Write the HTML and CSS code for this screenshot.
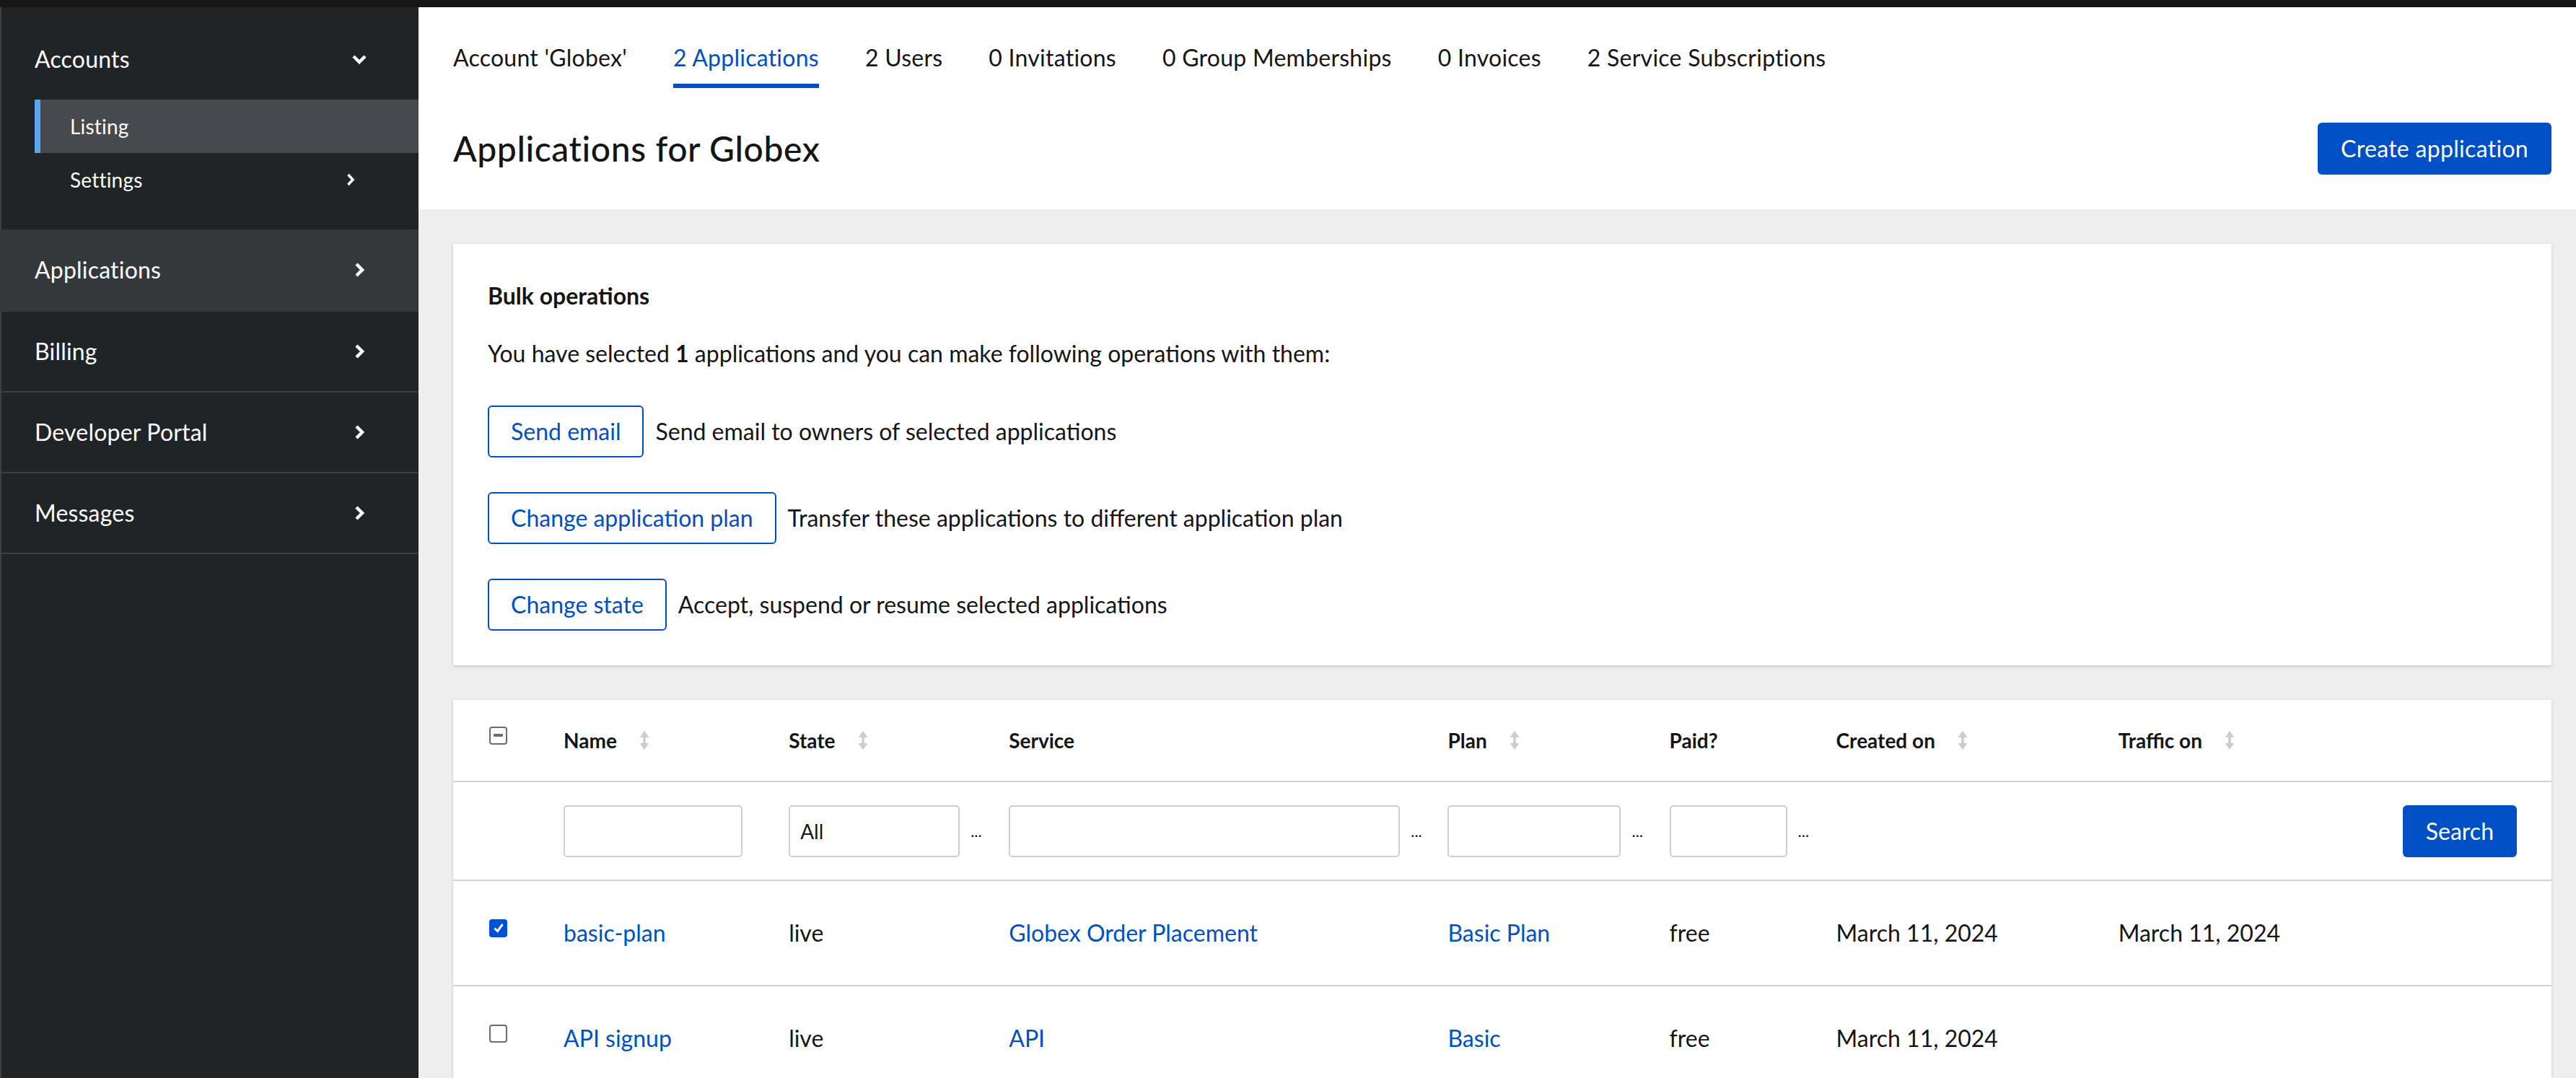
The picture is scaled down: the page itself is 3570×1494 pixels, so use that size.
FILE: index.html
```html
<!DOCTYPE html>
<html lang="en">
<head>
<meta charset="utf-8">
<title>Applications for Globex</title>
<link rel="stylesheet" href="styles.css">
</head>
<body>
<div class="topbar"></div>
<div class="layout">
  <nav class="sidebar">
    <div class="nav-group">
      <div class="nav-row nav-group-header">
        <span>Accounts</span>
        <span class="icon-box"><svg width="22" height="14" viewBox="0 0 22 14"><polyline points="3,3 11,11 19,3" fill="none" stroke="#fff" stroke-width="4.5" stroke-linejoin="miter"/></svg></span>
      </div>
      <ul class="subnav">
        <li class="nav-row sub-item current"><span>Listing</span></li>
        <li class="nav-row sub-item"><span>Settings</span><svg width="12" height="18" viewBox="0 0 12 18"><polyline points="2.5,2 9,9 2.5,16" fill="none" stroke="#fff" stroke-width="3.6"/></svg></li>
      </ul>
    </div>
    <div class="nav-row nav-item active"><span>Applications</span><span class="icon-box"><svg width="15" height="22" viewBox="0 0 15 22"><polyline points="3,3 11,11 3,19" fill="none" stroke="#fff" stroke-width="4.5"/></svg></span></div>
    <div class="nav-row nav-item"><span>Billing</span><span class="icon-box"><svg width="15" height="22" viewBox="0 0 15 22"><polyline points="3,3 11,11 3,19" fill="none" stroke="#fff" stroke-width="4.5"/></svg></span></div>
    <div class="nav-row nav-item"><span>Developer Portal</span><span class="icon-box"><svg width="15" height="22" viewBox="0 0 15 22"><polyline points="3,3 11,11 3,19" fill="none" stroke="#fff" stroke-width="4.5"/></svg></span></div>
    <div class="nav-row nav-item"><span>Messages</span><span class="icon-box"><svg width="15" height="22" viewBox="0 0 15 22"><polyline points="3,3 11,11 3,19" fill="none" stroke="#fff" stroke-width="4.5"/></svg></span></div>
  </nav>

  <main class="main">
    <header class="page-header">
      <nav class="tabs">
        <a class="tab" href="#">Account 'Globex'</a>
        <a class="tab active" href="#">2 Applications</a>
        <a class="tab" href="#">2 Users</a>
        <a class="tab" href="#">0 Invitations</a>
        <a class="tab" href="#">0 Group Memberships</a>
        <a class="tab" href="#">0 Invoices</a>
        <a class="tab" href="#">2 Service Subscriptions</a>
      </nav>
      <div class="title-row">
        <h1 class="title">Applications for Globex</h1>
        <button class="btn btn-primary">Create application</button>
      </div>
    </header>

    <div class="content">
      <section class="card bulk">
        <h2 class="bulk-title">Bulk operations</h2>
        <p class="bulk-text">You have selected <strong>1</strong> applications and you can make following operations with them:</p>
        <div class="ops">
          <div class="op"><button class="btn btn-secondary">Send email</button><span>Send email to owners of selected applications</span></div>
          <div class="op"><button class="btn btn-secondary">Change application plan</button><span>Transfer these applications to different application plan</span></div>
          <div class="op"><button class="btn btn-secondary">Change state</button><span>Accept, suspend or resume selected applications</span></div>
        </div>
      </section>

      <section class="card table-card">
        <table class="apps">
          <colgroup>
            <col class="c-check"><col class="c-name"><col class="c-state"><col class="c-service"><col class="c-plan"><col class="c-paid"><col class="c-created"><col class="c-traffic"><col class="c-search">
          </colgroup>
          <thead>
            <tr>
              <th class="check-cell"><span class="cb mixed"><span class="dash"></span></span></th>
              <th><span class="th-inner">Name<svg class="sort" width="12" height="28" viewBox="0 0 12 28"><rect x="4.2" y="6" width="3.6" height="16" fill="#cdcdcd"/><path d="M0.5 9.5L6 1.5L11.5 9.5Z M0.5 18.5L6 26.5L11.5 18.5Z" fill="#cdcdcd" stroke="#cdcdcd" stroke-width="1" stroke-linejoin="round"/></svg></span></th>
              <th><span class="th-inner">State<svg class="sort" width="12" height="28" viewBox="0 0 12 28"><rect x="4.2" y="6" width="3.6" height="16" fill="#cdcdcd"/><path d="M0.5 9.5L6 1.5L11.5 9.5Z M0.5 18.5L6 26.5L11.5 18.5Z" fill="#cdcdcd" stroke="#cdcdcd" stroke-width="1" stroke-linejoin="round"/></svg></span></th>
              <th>Service</th>
              <th><span class="th-inner">Plan<svg class="sort" width="12" height="28" viewBox="0 0 12 28"><rect x="4.2" y="6" width="3.6" height="16" fill="#cdcdcd"/><path d="M0.5 9.5L6 1.5L11.5 9.5Z M0.5 18.5L6 26.5L11.5 18.5Z" fill="#cdcdcd" stroke="#cdcdcd" stroke-width="1" stroke-linejoin="round"/></svg></span></th>
              <th>Paid?</th>
              <th><span class="th-inner">Created on<svg class="sort" width="12" height="28" viewBox="0 0 12 28"><rect x="4.2" y="6" width="3.6" height="16" fill="#cdcdcd"/><path d="M0.5 9.5L6 1.5L11.5 9.5Z M0.5 18.5L6 26.5L11.5 18.5Z" fill="#cdcdcd" stroke="#cdcdcd" stroke-width="1" stroke-linejoin="round"/></svg></span></th>
              <th><span class="th-inner">Traffic on<svg class="sort" width="12" height="28" viewBox="0 0 12 28"><rect x="4.2" y="6" width="3.6" height="16" fill="#cdcdcd"/><path d="M0.5 9.5L6 1.5L11.5 9.5Z M0.5 18.5L6 26.5L11.5 18.5Z" fill="#cdcdcd" stroke="#cdcdcd" stroke-width="1" stroke-linejoin="round"/></svg></span></th>
              <th></th>
            </tr>
          </thead>
          <tbody>
            <tr class="filters">
              <td class="check-cell"></td>
              <td><div class="filter"><input class="field w-name" type="text"></div></td>
              <td><div class="filter"><input class="field w-state" type="text" value="All"><span class="dots">...</span></div></td>
              <td><div class="filter"><input class="field w-service" type="text"><span class="dots">...</span></div></td>
              <td><div class="filter"><input class="field w-plan" type="text"><span class="dots">...</span></div></td>
              <td><div class="filter"><input class="field w-paid" type="text"><span class="dots">...</span></div></td>
              <td></td>
              <td></td>
              <td class="search-cell"><button class="btn btn-primary">Search</button></td>
            </tr>
            <tr>
              <td class="check-cell"><span class="cb checked"><svg width="16" height="16" viewBox="0 0 16 16"><polyline points="2.5,8.5 6.5,12.5 13.5,3" fill="none" stroke="#fff" stroke-width="3"/></svg></span></td>
              <td><a href="#">basic-plan</a></td>
              <td>live</td>
              <td><a href="#">Globex Order Placement</a></td>
              <td><a href="#">Basic Plan</a></td>
              <td>free</td>
              <td>March 11, 2024</td>
              <td>March 11, 2024</td>
              <td></td>
            </tr>
            <tr>
              <td class="check-cell"><span class="cb"></span></td>
              <td><a href="#">API signup</a></td>
              <td>live</td>
              <td><a href="#">API</a></td>
              <td><a href="#">Basic</a></td>
              <td>free</td>
              <td>March 11, 2024</td>
              <td></td>
              <td></td>
            </tr>
          </tbody>
        </table>
      </section>
    </div>
  </main>
</div>
</body>
</html>
```

FILE: styles.css
```css
* { box-sizing: border-box; }
html, body { margin: 0; }
body {
  font-family: Lato, "Liberation Sans", sans-serif;
  color: #151515;
  background: #eeeeee;
  overflow: hidden;
}
a { color: #004fc4; text-decoration: none; }

.topbar { height: 10px; background: #151515; }
.layout { display: flex; min-height: 1484px; }

/* Sidebar */
.sidebar {
  flex: 0 0 580px;
  width: 580px;
  background: #212427;
  box-shadow: inset 2px 0 0 #3c3f42;
  color: #fff;
  font-size: 32px;
  line-height: 48px;
  letter-spacing: 0.2px;
}
.nav-row { display: flex; align-items: center; justify-content: space-between; }
.icon-box { width: 24px; display: flex; justify-content: center; align-items: center; }
.nav-group { padding: 16px 0 32px; }
.nav-group-header { padding: 32px 70px 32px 48px; }
.subnav { list-style: none; margin: 0; padding: 0; font-size: 28px; line-height: 42px; }
.sub-item {
  margin-left: 48px;
  padding: 16px 88px 16px 41px;
  border-left: 8px solid transparent;
}
.sub-item.current { background: #46494d; border-left-color: #5ba6ef; }
.nav-item { padding: 31px 70px 31px 48px; border-bottom: 2px solid #3c3f42; }
.nav-item.active { background: #35383b; padding-top: 32px; padding-bottom: 32px; border-bottom-color: #35383b; }

/* Main */
.main { flex: 1; min-width: 0; display: flex; flex-direction: column; }
.page-header { background: #fff; padding: 32px 34px 48px 48px; }
.tabs { display: flex; gap: 64px; font-size: 32px; line-height: 48px; letter-spacing: 0.25px; }
.tab { padding: 14px 0 12px; border-bottom: 6px solid transparent; color: #151515; }
.tab.active { color: #004fc4; border-bottom-color: #004fc4; }
.title-row { display: flex; align-items: center; justify-content: space-between; margin-top: 48px; }
.title { margin: 0; font-size: 48px; font-weight: 500; line-height: 62px; letter-spacing: 0.6px; }

.btn {
  font-family: inherit;
  font-size: 32px;
  line-height: 48px;
  border-radius: 6px;
  cursor: pointer;
  white-space: nowrap;
}
.btn-primary { background: #004fc4; color: #fff; border: 0; padding: 12px 32px; }
.title-row .btn-primary { letter-spacing: 0.3px; }
.btn-secondary { background: #fff; color: #004fc4; border: 2px solid #004fc4; padding: 10px 30px; }

.content { padding: 48px 34px 48px 48px; display: flex; flex-direction: column; gap: 48px; }
.card { background: #fff; box-shadow: 0 2px 4px rgba(3, 3, 3, 0.12), 0 0 4px rgba(3, 3, 3, 0.06); }

/* Bulk operations */
.bulk { padding: 48px; font-size: 32px; line-height: 48px; }
.bulk-title { margin: 0; font-size: 32px; font-weight: 700; line-height: 48px; }
.bulk-text { margin: 32px 0 0; }
.ops { display: flex; flex-direction: column; align-items: flex-start; gap: 48px; margin-top: 48px; }
.op { display: flex; align-items: center; gap: 16px; }

/* Table */
.apps { width: 100%; border-collapse: collapse; table-layout: fixed; font-size: 32px; line-height: 48px; }
.c-check { width: 153px; }
.c-name { width: 312px; }
.c-state { width: 305px; }
.c-service { width: 608px; }
.c-plan { width: 307px; }
.c-paid { width: 231px; }
.c-created { width: 391px; }
.c-traffic { width: 390px; }
.c-search { width: 210px; }
.apps tr { border-bottom: 2px solid #d2d2d2; }
.apps th {
  font-size: 28px;
  line-height: 42px;
  font-weight: 700;
  text-align: left;
  padding: 35px 0;
  vertical-align: middle;
}
.apps td { padding: 48px 0; vertical-align: middle; white-space: nowrap; }
.apps .check-cell { padding-left: 50px; }
.th-inner { display: inline-flex; align-items: center; gap: 32px; }
.sort { display: block; }

.cb {
  display: flex;
  align-items: center;
  justify-content: center;
  width: 25px;
  height: 25px;
  margin-bottom: 14px;
  border: 2px solid #6a6e73;
  border-radius: 4px;
  background: #fff;
}
.cb.checked { background: #0050d6; border-color: #0050d6; }
.dash { display: block; width: 13px; height: 4px; border-radius: 1px; background: #6a6e73; }

.apps .filters td { padding: 32px 0 31px; }
.filter { display: flex; align-items: center; }
.field {
  height: 72px;
  border: 2px solid #cfcfcf;
  border-radius: 5px;
  font-family: inherit;
  font-size: 28px;
  padding: 0 14px;
  background: #fff;
  color: #151515;
}
.w-name { width: 248px; }
.w-state { width: 237px; }
.w-service { width: 542px; }
.w-plan { width: 240px; }
.w-paid { width: 163px; }
.dots { font-size: 22px; line-height: 22px; margin-left: 15px; }
.apps .filters td.search-cell { text-align: right; padding-right: 48px; }
```
